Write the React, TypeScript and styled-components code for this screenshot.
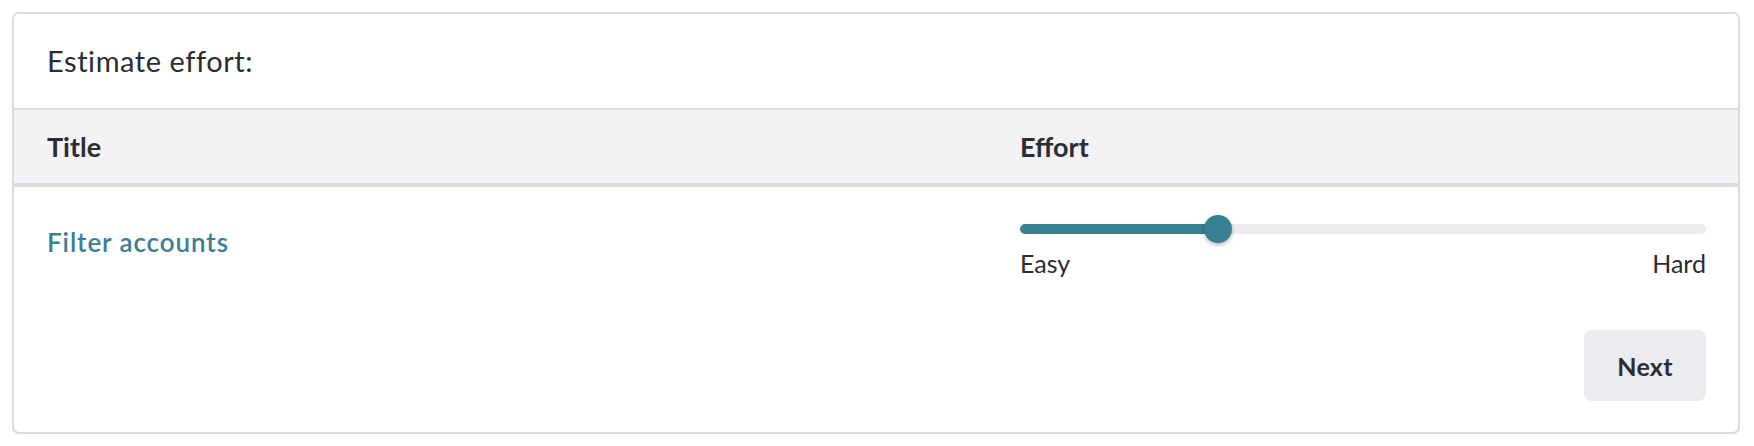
import React, { FC } from 'react'
import styled, { createGlobalStyle } from 'styled-components'

const Colour = {
    text: '#2b2d33',
    teal: '#3a8093',
    border: '#d9dbe1',
    headBg: '#f3f3f5',
    headBorder: '#dcdde3',
    track: '#ebebf0',
    button: '#ebebf0',
    white: '#ffffff',
}

const GlobalStyle = createGlobalStyle`
    html, body {
        margin: 0;
        padding: 0;
        background: ${Colour.white};
    }
    body {
        font-family: Lato, "Liberation Sans", sans-serif;
        color: ${Colour.text};
    }
`

const Page = styled.div`
    padding: 12px 14px 12px 12px;
`

const Card = styled.section`
    width: 1728px;
    box-sizing: border-box;
    border: 2px solid ${Colour.border};
    border-radius: 7px;
    background-color: ${Colour.white};
    overflow: hidden;
`

const CardHeader = styled.header`
    height: 94px;
    display: flex;
    align-items: center;
    padding: 0 33px;
    border-bottom: 2px solid ${Colour.border};
    font-size: 29px;
    line-height: 34px;
    letter-spacing: 0.55px;
`

const Row = styled.div<{ $head?: boolean }>`
    display: grid;
    grid-template-columns: 973px 1fr;
    background-color: ${(p) => (p.$head ? Colour.headBg : Colour.white)};
    border-bottom: ${(p) => (p.$head ? `4px solid ${Colour.headBorder}` : 'none')};
    height: ${(p) => (p.$head ? '73px' : 'auto')};
`

const HeadCell = styled.div`
    display: flex;
    align-items: center;
    padding: 0 32px 0 33px;
    font-size: 27px;
    font-weight: 700;
`

const Cell = styled.div<{ $top: number }>`
    padding: ${(p) => p.$top}px 32px 0 33px;
`

const TitleLink = styled.a`
    color: ${Colour.teal};
    font-size: 26px;
    line-height: 32px;
    font-weight: 600;
    letter-spacing: 0.9px;
    text-decoration: none;
    cursor: pointer;
`

const SliderRoot = styled.div`
    position: relative;
    height: 28px;
    display: flex;
    align-items: center;
`

const Track = styled.div`
    position: relative;
    width: 100%;
    height: 10px;
    border-radius: 5px;
    background-color: ${Colour.track};
`

const Range = styled.div`
    height: 100%;
    border-radius: 5px;
    background-color: ${Colour.teal};
`

const Thumb = styled.div`
    position: absolute;
    top: 50%;
    width: 28px;
    height: 28px;
    margin: -14px 0 0 -14px;
    border-radius: 50%;
    background-color: ${Colour.teal};
    box-shadow: 0 2px 4px rgba(0, 0, 0, 0.28);
`

const Scale = styled.div`
    display: flex;
    justify-content: space-between;
    margin-top: 4px;
    font-size: 25px;
    line-height: 32px;
`

const Footer = styled.footer`
    display: flex;
    justify-content: flex-end;
    padding: 51px 32px 31px;
`

const Button = styled.button`
    width: 122px;
    height: 71px;
    border: none;
    border-radius: 8px;
    background-color: ${Colour.button};
    color: ${Colour.text};
    font-family: inherit;
    font-size: 25px;
    font-weight: 700;
    letter-spacing: 0.3px;
    cursor: pointer;
`

interface EffortSliderProps {
    value: number
}

const EffortSlider: FC<EffortSliderProps> = ({ value }) => (
    <div>
        <SliderRoot>
            <Track>
                <Range style={{ width: `${value}%` }} />
                <Thumb style={{ left: `${value}%` }} />
            </Track>
        </SliderRoot>
        <Scale>
            <span>Easy</span>
            <span>Hard</span>
        </Scale>
    </div>
)

const App: FC = () => {
    return (
        <Page>
            <GlobalStyle />
            <Card>
                <CardHeader>Estimate effort:</CardHeader>
                <Row $head>
                    <HeadCell>Title</HeadCell>
                    <HeadCell>Effort</HeadCell>
                </Row>
                <Row>
                    <Cell $top={39}>
                        <TitleLink>Filter accounts</TitleLink>
                    </Cell>
                    <Cell $top={28}>
                        <EffortSlider value={28.9} />
                    </Cell>
                </Row>
                <Footer>
                    <Button type="button">Next</Button>
                </Footer>
            </Card>
        </Page>
    )
}

export default App
